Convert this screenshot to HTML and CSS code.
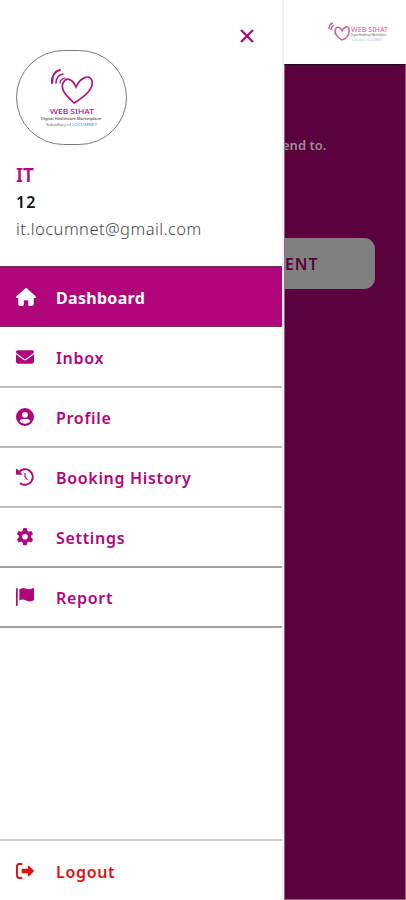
FILE: index.html
```html
<!DOCTYPE html>
<html lang="en">
<head>
<meta charset="utf-8">
<title>Web Sihat</title>
<link rel="stylesheet" href="styles.css">
</head>
<body>
<div class="screen">
  <aside class="drawer">
    <button class="close" aria-label="Close"><svg width="16" height="16" viewBox="0 0 16 16"><path d="M2 2L14 14M14 2L2 14"/></svg></button>
    <div class="avatar">
      <svg width="109" height="93" viewBox="0 0 109 93">
        <g fill="none" stroke="#b5127f" stroke-linecap="round">
          <path stroke-width="1.700" d="M57 52C50 45 43 39 46 32C49 26 55 27 59 36C63 27 73 22 75 30C77 38 67 46 57 52"/>
          <path stroke-width="2.2" d="M35 32C35 25 38 20 43 19"/>
          <path stroke-width="1.600" d="M39 32C39 28 41 24 46 23"/>
          <path stroke-width="1.200" d="M43 32C43 30 45 27 48 27"/>
        </g>
        <text x="33" y="63" class="logo-name" textLength="44" lengthAdjust="spacingAndGlyphs">WEB SIHAT</text>
        <text x="24" y="68.500" class="logo-tag" textLength="60" lengthAdjust="spacingAndGlyphs">Digital Healthcare Marketplace</text>
        <text x="29" y="75" class="logo-sub" textLength="25" lengthAdjust="spacingAndGlyphs">Subsidiary of</text>
        <text x="55" y="75" class="logo-sub blue" textLength="25" lengthAdjust="spacingAndGlyphs">LOCUMNET</text>
      </svg>
    </div>
    <div class="user">
      <div class="name">IT</div>
      <div class="number">12</div>
      <div class="email"><span>it.locumnet@gmail.com</span></div>
    </div>
    <nav class="menu">
      <a class="item active"><svg class="icon" viewBox="0 0 576 512"><path d="M576 256c0 18-15 32-32 32h-32l1 160c0 35-26 64-58 64h-71c-18 0-32-14-32-32v-96c0-18-14-32-32-32h-64c-18 0-32 14-32 32v96c0 18-14 32-32 32h-72c-31 0-56-25-56-56V288H32c-18 0-32-14-32-32 0-9 3-17 10-24L266 8c7-7 15-8 22-8s15 2 21 7l255 225c8 7 12 15 12 24z"/></svg><span>Dashboard</span></a>
      <a class="item"><svg class="icon" viewBox="0 0 512 512"><path d="M48 64C22 64 0 86 0 112c0 15 7 29 19 38l218 164c11 8 27 8 38 0l218-164c12-9 19-23 19-38 0-26-22-48-48-48zM0 176v208c0 35 29 64 64 64h384c35 0 64-29 64-64V176L294 339c-22 17-54 17-76 0z"/></svg><span>Inbox</span></a>
      <a class="item"><svg class="icon" viewBox="0 0 512 512"><path fill-rule="evenodd" d="M256 0a256 256 0 1 0 0 512 256 256 0 0 0 0-512zm0 112a82 82 0 1 1 0 164 82 82 0 0 1 0-164zM103 377c20-42 53-67 97-67h112c44 0 77 25 97 67-38 44-91 71-153 71s-115-27-153-71z"/></svg><span>Profile</span></a>
      <a class="item"><svg class="icon" viewBox="0 0 512 512"><path class="line" d="M77 124A222 222 0 1 1 132 440"/><path d="M0 40c0-18 20-26 32-14l134 134c13 13 4 32-14 32H24c-13 0-24-11-24-24z"/><path class="hand" d="M256 140V258L330 330"/></svg><span>Booking History</span></a>
      <a class="item dark"><svg class="icon" viewBox="0 0 512 512"><path fill-rule="evenodd" d="M205 10q51-15 102 0l16 70 40 24 70-22q37 40 51 91l-53 49v47l53 49q-14 51-51 91l-70-22-40 24-16 70q-51 15-102 0l-16-70-40-24-70 22q-37-40-51-91l53-49v-47l-53-49q14-51 51-91l70 22 40-24zm51 158a80 80 0 1 0 0 160 80 80 0 0 0 0-160z"/></svg><span>Settings</span></a>
      <a class="item dark"><svg class="icon" viewBox="0 0 512 512"><path d="M24 0C11 0 0 11 0 24v464q0 24 24 24t24-24V24C48 11 37 0 24 0zM96 32v320c99-46 161-9 226 16 61 24 114 10 169-14 14-6 21-15 21-29V34c0-23-24-38-45-28-145 69-189-17-292-2-29 4-54 16-79 28z"/></svg><span>Report</span></a>
    </nav>
    <a class="item logout"><svg class="icon" viewBox="0 0 512 512"><path class="line" d="M158 58H96Q28 58 28 126V386Q28 454 96 454H158"/><path d="M505 273c9-9 9-25 0-34L377 111c-16-15-41-4-41 17v64H192c-18 0-32 14-32 32v64c0 18 14 32 32 32h144v64c0 21 25 32 41 17z"/></svg><span>Logout</span></a>
  </aside>
  <main class="page">
    <header class="topbar">
      <svg width="64" height="24" viewBox="0 0 64 24">
        <g fill="none" stroke="#cb5b91" stroke-width="1.400">
          <path d="M15 19C10 16 6 12 9 7C12 5 14 7 15 10C17 6 21 4 22 8C23 14 19 18 15 19"/>
          <path d="M2 8Q2 3 6 2M4 9Q4 6 7 4"/>
        </g>
        <text x="24" y="10.500" class="mini-name" textLength="37" lengthAdjust="spacingAndGlyphs">WEB SIHAT</text>
        <text x="24" y="14.500" class="mini-tag" textLength="35" lengthAdjust="spacingAndGlyphs">Digital Healthcare Marketplace</text>
        <text x="25" y="19.500" class="mini-sub" textLength="30" lengthAdjust="spacingAndGlyphs">Subsidiary of LOCUMNET</text>
      </svg>
    </header>
    <section class="content">
      <p class="hint">end to.</p>
      <div class="cta">ENT</div>
    </section>
  </main>
</div>
</body>
</html>
```
FILE: styles.css
```css
* { box-sizing: border-box; }
body { margin: 0; background: #fff; font-family: "Noto Sans", "Open Sans", sans-serif; }
.screen { display: flex; width: 406px; height: 900px; overflow: hidden; }
.drawer { width: 282px; flex: none; display: flex; flex-direction: column; background: #fff; }
.close { align-self: flex-end; margin: 28px 27px 0 0; width: 16px; height: 16px; padding: 0; border: 0; background: none; }
.close svg { display: block; fill: none; stroke: #a90b77; stroke-width: 2.3; }
.avatar { margin: 6px 0 0 16px; width: 111px; height: 95px; border: 1px solid #777; border-radius: 50px; overflow: hidden; }
.avatar svg { display: block; }
.logo-name { font-size: 7.5px; fill: #b5127f; font-weight: 500; }
.logo-tag { font-size: 3.5px; fill: #444; font-weight: 500; }
.logo-sub { font-size: 3.5px; fill: #666; }
.logo-sub.blue { fill: #2b8fd0; }
.user { height: 121px; padding: 17px 16px 0; }
.name { height: 26px; line-height: 26px; font-size: 19px; font-weight: 600; color: #b1087b; }
.number { height: 28px; line-height: 28px; font-size: 16px; font-weight: 600; color: #111; letter-spacing: 1px; }
.email { height: 27px; line-height: 26px; font-size: 16.5px; color: #3f474e; font-weight: 300; letter-spacing: .45px; }
.item { display: flex; align-items: center; height: 60px; padding-left: 16px; border-bottom: 2px solid #bcbcbc; font-size: 16px; font-weight: 600; letter-spacing: .68px; color: #b1057b; }
.item span { margin-left: 22px; position: relative; top: 1px; }
.icon { width: 18px; height: 18px; fill: currentColor; overflow: visible; }
.line { fill: none; stroke: currentColor; stroke-width: 54; stroke-linecap: round; }
.hand { fill: none; stroke: currentColor; stroke-width: 34; }
.item.dark { border-bottom-color: #a2a2a2; }
.item.active { height: 61px; margin-bottom: 1px; background: #b1057b; color: #fff; border-top: 1px solid #65334f; border-bottom: 1px solid #65334f; font-weight: 700; letter-spacing: .3px; }
.active .icon { width: 20px; }
.active span { margin-left: 20px; }
.item.logout { margin-top: auto; height: 61px; border-top: 2px solid #cfcfcf; border-bottom: 0; color: #d91414; }
.page { flex: 1; min-width: 0; border-left: 2px solid #f0f0f0; display: flex; flex-direction: column; }
.topbar { height: 64px; flex: none; padding: 21px 0 0 43px; }
.topbar svg { display: block; }
.mini-name { font-size: 7px; fill: #cf628e; }
.mini-tag { font-size: 3px; fill: #555; }
.mini-sub { font-size: 3.5px; fill: #a7c6d4; }
.content { flex: 1; overflow: hidden; background: #5a003d; border: 1px solid #94668a; border-top-color: #190011; }
.hint { margin: 69px 0 0 -3px; height: 22px; line-height: 22px; font-size: 13px; font-weight: 600; color: #a08a99; }
.cta { margin-top: 82px; width: 90px; height: 51px; line-height: 52px; background: #808080; border-radius: 0 11px 11px 0; font-size: 16px; font-weight: 600; letter-spacing: .9px; color: #5a003d; }
```
